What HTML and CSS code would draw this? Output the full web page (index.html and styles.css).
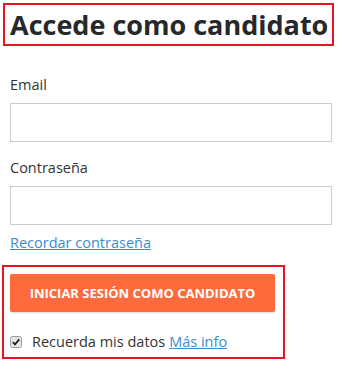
FILE: index.html
```html
<!DOCTYPE html>
<html lang="es">
<head>
  <meta charset="UTF-8" />
  <title>Accede como candidato</title>
  <link rel="stylesheet" href="styles.css">
</head>
<body>
  <div class="title-box">
    <h1>Accede como candidato</h1>
  </div>

  <form class="login-form">
    <label for="email">Email</label>
    <input type="text" id="email" />
    <label for="password">Contraseña</label>
    <input type="password" id="password" />
    <a href="#" class="link">Recordar contraseña</a>
  </form>

  <div class="action-box">
    <button type="button" class="login-btn">INICIAR SESIÓN COMO CANDIDATO</button>
    <div class="remember">
      <label for="remember" class="check">
        <input type="checkbox" id="remember" checked />
        <svg width="12" height="12" viewBox="0 0 12 12">
          <rect x="0.5" y="0.5" width="11" height="11" rx="2" fill="#e6e6e6" stroke="#9a9a9a" />
          <path d="M2.8 6.2 L5 8.4 L9.3 3.4" fill="none" stroke="#222" stroke-width="1.8" />
        </svg>
        Recuerda mis datos
      </label>
      <a href="#" class="link">Más info</a>
    </div>
  </div>
</body>
</html>
```

FILE: styles.css
```css
html, body {
  margin: 0;
  background: #ffffff;
  font-family: "Open Sans", Arial, sans-serif;
  color: #333333;
}
.title-box {
  margin: 3px 16px 0 3px;
  border: 2px solid #e8141f;
}
.title-box h1 {
  margin: 0;
  padding: 0 5px;
  font-size: 27px;
  line-height: 39px;
  font-weight: 700;
  color: #26282b;
  white-space: nowrap;
}
.login-form {
  display: flex;
  flex-direction: column;
  padding: 29px 18px 0 10px;
}
.login-form label {
  font-size: 14.5px;
  line-height: 20px;
  margin-bottom: 8px;
}
.login-form input {
  height: 39px;
  box-sizing: border-box;
  border: 1px solid #cccccc;
  margin: 0 0 16px;
  padding: 0 8px;
  font-size: 14px;
}
.login-form input#password {
  margin-bottom: 8px;
}
.link {
  color: #3a8ccb;
  font-size: 14.5px;
  line-height: 20px;
  text-decoration: underline;
}
.action-box {
  display: flex;
  flex-direction: column;
  width: 265px;
  margin: 12px 0 0 2px;
  border: 2px solid #e8141f;
  padding: 7px 8px 5px 6px;
}
.login-btn {
  height: 38px;
  border: none;
  border-radius: 2px;
  background: #ff6a3d;
  color: #ffffff;
  font-family: inherit;
  font-size: 13px;
  font-weight: 700;
  box-shadow: 0 1px 2px rgba(0, 0, 0, 0.15);
}
.remember {
  display: flex;
  align-items: center;
  gap: 4px;
  margin-top: 20px;
  font-size: 14.5px;
  line-height: 20px;
}
.check {
  display: flex;
  align-items: center;
  gap: 10px;
}
.check input {
  display: none;
}
```
